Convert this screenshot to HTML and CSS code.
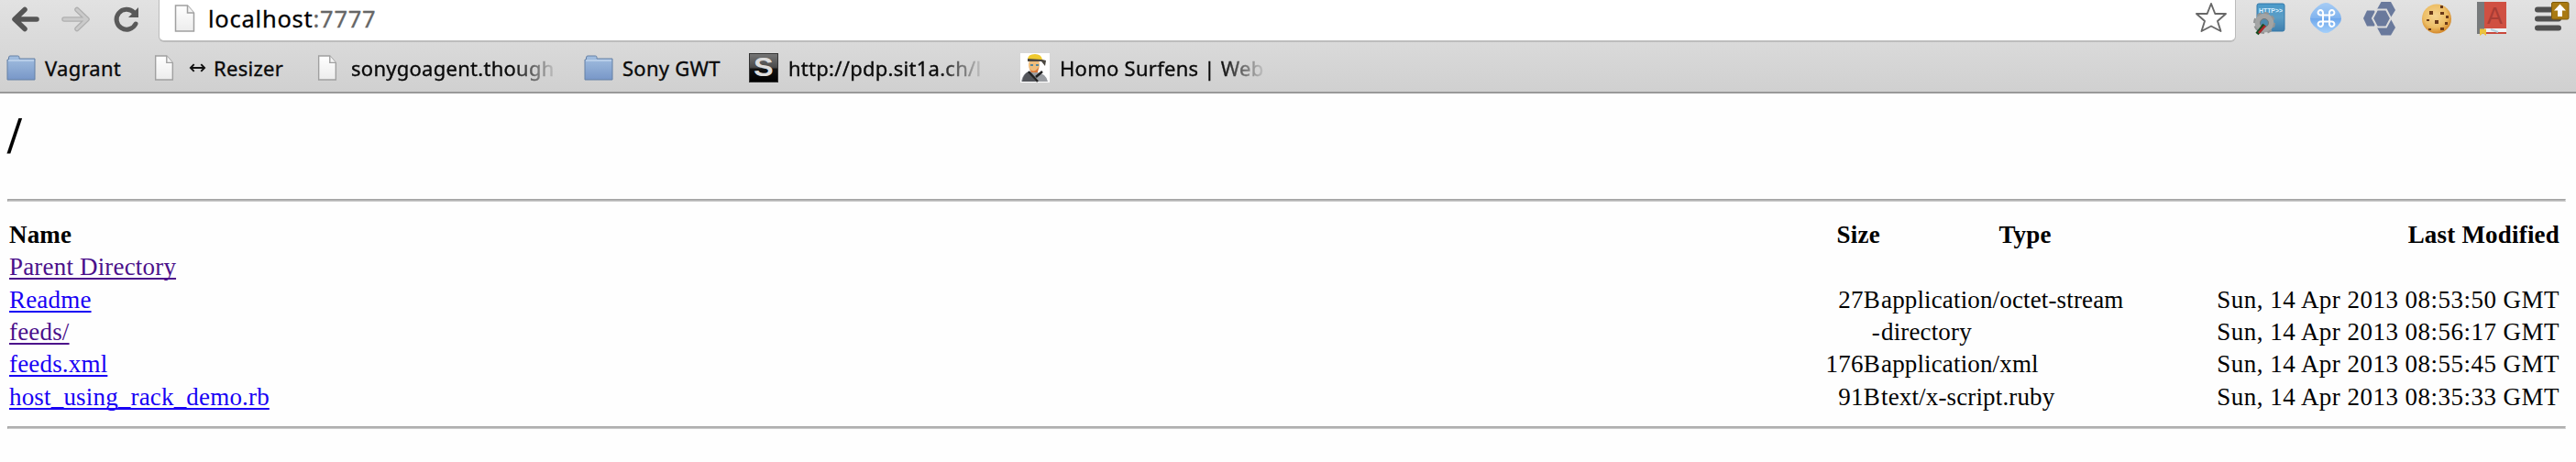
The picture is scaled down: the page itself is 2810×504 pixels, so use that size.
FILE: index.html
```html
<!DOCTYPE html>
<html lang="en">
<head>
<meta charset="utf-8">
<title>/</title>
<link rel="stylesheet" href="styles.css">
</head>
<body>
<svg class="defs" width="0" height="0">
  <defs>
    <linearGradient id="folderFill" x1="0" y1="0" x2="0" y2="1"><stop offset="0" stop-color="#a3bfe0"/><stop offset="1" stop-color="#7897c8"/></linearGradient>
    <linearGradient id="pageFill" x1="0" y1="0" x2="0" y2="1"><stop offset="0" stop-color="#fff"/><stop offset="1" stop-color="#ececec"/></linearGradient>
    <linearGradient id="sFill" x1="0" y1="0" x2="0" y2="1"><stop offset="0" stop-color="#777"/><stop offset=".48" stop-color="#4a4a4a"/><stop offset=".55" stop-color="#111"/><stop offset="1" stop-color="#000"/></linearGradient>
    <linearGradient id="httpFill" x1="0" y1="0" x2="0" y2="1"><stop offset="0" stop-color="#4a9aca"/><stop offset=".5" stop-color="#5b9dc5"/><stop offset="1" stop-color="#3f7fae"/></linearGradient>
    <linearGradient id="cmdFill" x1="0" y1="0" x2="0" y2="1"><stop offset="0" stop-color="#a6ccf5"/><stop offset=".5" stop-color="#82b4ee"/><stop offset=".52" stop-color="#6fa8ec"/><stop offset="1" stop-color="#a4cffa"/></linearGradient>
    <radialGradient id="cookieFill" cx=".45" cy=".4" r=".6"><stop offset="0" stop-color="#f6d592"/><stop offset=".65" stop-color="#edbe66"/><stop offset="1" stop-color="#d4882a"/></radialGradient>
    <symbol id="folder" viewBox="0 0 32 28"><path d="M1 5V27H31V4H14V2.500Q14 1 12.500 1H4Q2.500 1 2.500 3V5Z" fill="url(#folderFill)" stroke="#6580a5"/><path d="M2 6H30" stroke="#c0d4ec" stroke-width="1.500"/></symbol>
    <symbol id="page" viewBox="0 0 22 30"><path d="M1 1H14L21 9V29H1Z" fill="url(#pageFill)" stroke="#a0a0a0" stroke-width="1.500"/><path d="M14 1V9H21" fill="#f3f3f3" stroke="#a0a0a0" stroke-width="1.500"/></symbol>
  </defs>
</svg>
<header class="chrome">
  <div class="toolbar">
    <nav class="nav">
      <svg class="back" viewBox="0 0 32 28"><path d="M15 3.500L4 14L15 24.500M5 14H28" fill="none" stroke="#555" stroke-width="5.500" stroke-linecap="round" stroke-linejoin="round"/></svg>
      <svg class="forward" viewBox="0 0 32 28"><path d="M17 3.500L28 14L17 24.500M27 14H3" fill="none" stroke="#b0b0b0" stroke-width="5.500" stroke-linecap="round" stroke-linejoin="round"/><path d="M17 3.500L28 14L17 24.500M26 14H3" fill="none" stroke="#cacaca" stroke-width="3" stroke-linecap="round" stroke-linejoin="round"/></svg>
      <svg class="reload" viewBox="0 0 28 28"><path d="M22 6.500A11 11 0 1 0 24 19" fill="none" stroke="#595959" stroke-width="5" stroke-linecap="round"/><path d="M27 1V12H16Z" fill="#595959"/></svg>
    </nav>
    <div class="omnibox">
      <svg class="page-icon large"><use href="#page"/></svg>
      <span class="url">localhost<span class="port">:7777</span></span>
      <svg class="star" viewBox="0 0 36 36"><path d="M18 2L22.300 13H34L25 21L28.500 32L18 26.500L7.500 32L11 21L2 13H13.700Z" fill="#fff" stroke="#686868" stroke-width="1.900" stroke-linejoin="round"/></svg>
    </div>
    <div class="extensions">
      <svg viewBox="0 0 36 36"><rect x="4" y="2" width="30" height="30" rx="2" fill="url(#httpFill)" stroke="#3579a8"/><text x="6" y="12" class="http" textLength="26" lengthAdjust="spacingAndGlyphs">HTTP&gt;&gt;</text><circle cx="12" cy="23" r="7.500" fill="none" stroke="#a2a4a4" stroke-width="6"/><circle cx="12" cy="23" r="11" fill="none" stroke="#929494" stroke-width="2" stroke-dasharray="5 3.600"/><circle cx="12" cy="23" r="4.500" fill="#4d8aae" stroke="#777"/><path d="M12 25L4 35" stroke="#164d20" stroke-width="4"/><path d="M13 26L6 34" stroke="#ad2529" stroke-width="2.500"/></svg>
      <svg viewBox="0 0 36 36"><path d="M18 1Q23 1 29 7Q35 13 35 18Q35 23 29 28Q23 34 18 34Q13 34 7 28Q1 23 1 18Q1 13 7 7Q13 1 18 1Z" fill="url(#cmdFill)"/><path d="M15 14.500V21.500H22V14.500ZM15 14.500H12.500A2.700 2.700 0 1 1 15 12ZM22 14.500V12A2.700 2.700 0 1 1 24.500 14.500ZM22 21.500H24.500A2.700 2.700 0 1 1 22 24ZM15 21.500V24A2.700 2.700 0 1 1 12.500 21.500Z" fill="none" stroke="#fff" stroke-width="2"/></svg>
      <svg viewBox="0 0 36 36"><g fill="#69799c" transform="translate(-1 -2)"><path d="M0 20L4 11.500H12L16 20L12 28.500H4Z"/><path d="M15 10L19.500 2H30L35 11L30 19H19.500Z"/><path d="M15 30L19.500 21H30L35 30L30 38.500H19.500Z"/><path d="M10 20L15 10.500H25L30 20L25 29.500H15Z" stroke="#dcdcdc" stroke-width="2"/></g></svg>
      <svg viewBox="0 0 36 36"><circle cx="18" cy="18.500" r="16" fill="url(#cookieFill)"/><g fill="#693919" transform="translate(0 -1)"><rect x="10" y="11" width="4" height="4"/><rect x="22" y="5" width="3" height="3"/><rect x="22" y="12" width="4" height="3"/><rect x="16" y="21" width="4" height="4"/><rect x="28" y="16" width="3" height="3"/><rect x="7" y="20" width="3" height="2"/><rect x="27" y="23" width="3" height="3"/><rect x="22" y="29" width="4" height="3"/><rect x="9" y="30" width="3" height="2"/></g></svg>
      <svg viewBox="0 0 36 36"><rect x="2" y="0" width="32" height="29" fill="#d05042"/><rect x="2" y="0" width="8" height="35" fill="#777a7c"/><path d="M10 29H34V33H10Z" fill="#eef2f5"/><path d="M10 34H34" stroke="#c9483b" stroke-width="2"/><path d="M17 30L25 33" stroke="#b5d1dd" stroke-width="2"/><text x="13" y="24" class="dict">A</text><path d="M5 29.500H12V37L8.500 34.500L5 37Z" fill="#ecc23c"/></svg>
      <svg class="menu" viewBox="0 0 40 36"><g stroke="#505050" stroke-width="6" stroke-linecap="round"><path d="M5 8.500H28M5 18.500H28M5 28.500H28"/></g><rect x="20.500" y=".5" width="18.500" height="18.500" rx="1.500" fill="#a97a13" stroke="#815b08"/><path d="M29.500 2.500L36 9.500H32V16H27V9.500H23Z" fill="#fff"/></svg>
    </div>
  </div>
  <div class="bookmarks">
    <a class="bookmark vagrant"><svg class="folder-icon"><use href="#folder"/></svg><span>Vagrant</span></a>
    <a class="bookmark resizer"><svg class="page-icon"><use href="#page"/></svg><span class="label"><svg class="arrows" viewBox="0 0 20 12"><path d="M2 6H18M6 2L2 6L6 10M14 2L18 6L14 10" fill="none" stroke="#111" stroke-width="2"/></svg>Resizer</span></a>
    <a class="bookmark sony"><svg class="page-icon"><use href="#page"/></svg><span class="fade">sonygoagent.though</span></a>
    <a class="bookmark gwt"><svg class="folder-icon"><use href="#folder"/></svg><span>Sony GWT</span></a>
    <a class="bookmark pdp"><svg class="site-icon" viewBox="0 0 32 32"><rect x=".5" y=".5" width="31" height="31" fill="url(#sFill)" stroke="#333"/><text x="5" y="25" class="s-letter" textLength="22" lengthAdjust="spacingAndGlyphs">S</text></svg><span class="fade">http://pdp.sit1a.ch/l</span></a>
    <a class="bookmark homo"><svg class="site-icon" viewBox="0 0 32 32"><rect width="32" height="32" fill="#fff"/><path d="M1 31Q2 23 9 20L18 21Q28 22 30 31Z" fill="#999ca1"/><path d="M2 31Q3 23 9 20L17 31Z" fill="#53555a"/><path d="M9 20L19 31M17 26L24 20" stroke="#222" stroke-width="2.500"/><ellipse cx="15" cy="13" rx="6" ry="8.500" fill="#efbd7b"/><path d="M10 17Q15 23 20 15L19 21H12Z" fill="#d9793c"/><path d="M8 7Q8 1 16 1Q23 1 24 7Z" fill="#efc92e"/><path d="M8 6L24 7L28 8L27 14L23 9H8Z" fill="#4b4740"/><path d="M11 13H14M17 13H20" stroke="#56879c" stroke-width="2"/></svg><span class="fade">Homo Surfens | Web</span></a>
  </div>
</header>
<main class="listing">
  <h1>/</h1>
  <hr>
  <table>
    <colgroup><col class="c-name"><col class="c-size"><col class="c-type"><col class="c-mtime"></colgroup>
    <tr><th class="name">Name</th><th class="size">Size</th><th class="type">Type</th><th class="mtime">Last Modified</th></tr>
    <tr><td class="name"><a class="visited">Parent Directory</a></td><td></td><td></td><td></td></tr>
    <tr><td class="name"><a>Readme</a></td><td class="size">27B</td><td class="type">application/octet-stream</td><td class="mtime">Sun, 14 Apr 2013 08:53:50 GMT</td></tr>
    <tr><td class="name"><a class="visited">feeds/</a></td><td class="size">-</td><td class="type">directory</td><td class="mtime">Sun, 14 Apr 2013 08:56:17 GMT</td></tr>
    <tr><td class="name"><a>feeds.xml</a></td><td class="size">176B</td><td class="type">application/xml</td><td class="mtime">Sun, 14 Apr 2013 08:55:45 GMT</td></tr>
    <tr><td class="name"><a>host_using_rack_demo.rb</a></td><td class="size">91B</td><td class="type">text/x-script.ruby</td><td class="mtime">Sun, 14 Apr 2013 08:35:33 GMT</td></tr>
  </table>
  <hr>
</main>
</body>
</html>
```
FILE: styles.css
```css
* { box-sizing: border-box; }
body { margin: 0; height: 504px; overflow: hidden; background: #fefefe; color: #000; font-family: "Liberation Serif", "Times New Roman", serif; }
svg { display: block; flex: none; overflow: visible; }
.defs { position: absolute; }

.chrome { height: 102px; background: linear-gradient(#e2e2e2, #d0d0d0); border-bottom: 2px solid #999; font-family: "Noto Sans", sans-serif; }
.toolbar { display: flex; height: 46px; }
.nav { display: flex; width: 173px; padding: 7px 0 0 12px; }
.back, .forward { width: 32px; height: 28px; }
.forward { margin-left: 23px; }
.reload { width: 28px; height: 28px; margin-left: 25px; }
.omnibox { display: flex; width: 2266px; height: 46px; padding-left: 16px; background: #fff; border: 1px solid #bbb; border-top: 0; border-bottom: 2px solid #bdbdbd; border-radius: 0 0 6px 6px; }
.url { margin: 0 0 0 14px; font-size: 25.500px; line-height: 40px; letter-spacing: .75px; white-space: nowrap; -webkit-text-stroke: .3px currentColor; }
.port { color: #666; }
.star { width: 36px; height: 36px; margin: 2px 8px 0 auto; }
.extensions { display: flex; gap: 24.500px; padding: 2px 0 0 19px; }
.extensions svg { width: 36px; height: 36px; }
.extensions svg.menu { width: 40px; margin-left: 2.500px; }
.http { font: bold 8px "Liberation Sans", sans-serif; fill: #d8efff; }
.dict { font: 25px "Liberation Sans", sans-serif; fill: #a93d34; }
.s-letter { font: bold 29px "Liberation Sans", sans-serif; fill: #ddd; }

.page-icon { width: 22px; height: 28px; }
.page-icon.large { height: 30px; width: 23px; margin-top: 5px; }
.folder-icon { width: 32px; height: 28px; }
.site-icon { width: 32px; height: 32px; }
.bookmarks { display: flex; height: 54px; padding: 1px 0 0 7px; align-items: center; }
.bookmark { display: flex; align-items: center; font-size: 22px; line-height: 30px; letter-spacing: .27px; white-space: nowrap; color: #0a0a0a; -webkit-text-stroke: .35px currentColor; }
.vagrant { width: 161px; gap: 10px; }
.resizer { width: 178px; gap: 16px; }
.sony { width: 291px; gap: 15px; }
.gwt { width: 180px; gap: 10px; }
.pdp { width: 296px; gap: 11px; }
.homo { gap: 11px; }
.label { display: flex; align-items: center; gap: 8px; }
.arrows { width: 19px; height: 12px; }
.fade { -webkit-mask-image: linear-gradient(to right, #000 calc(100% - 46px), rgba(0,0,0,.1)); mask-image: linear-gradient(to right, #000 calc(100% - 46px), rgba(0,0,0,.1)); }

.listing { padding: 14px 11px 0 8px; }
h1 { margin: 0 0 37px; font-size: 56px; line-height: 64px; }
hr { height: 3px; margin: 0; border: 1px solid #a4a4a4; border-right-color: #ddd; border-bottom-color: #cacaca; background: #b4b4b4; }
table { width: 2783px; margin: 19px 0 14px 2px; table-layout: fixed; border-collapse: collapse; font-size: 27px; }
tr { height: 35.300px; }
td, th { padding: 0; line-height: 35px; white-space: nowrap; }
.c-name { width: 1942px; }
.c-size { width: 99px; }
.c-type { width: 315px; }
.c-mtime { width: 427px; }
.name { text-align: left; letter-spacing: .18px; }
.size { text-align: right; letter-spacing: .25px; }
.type { padding-left: 1px; letter-spacing: .15px; }
.mtime { text-align: right; letter-spacing: .47px; padding-right: 1px; }
th.mtime { letter-spacing: .2px; }
a { color: inherit; }
.name a { color: #1800f4; text-decoration: underline; text-decoration-thickness: 2px; text-underline-offset: 3px; text-decoration-skip-ink: none; }
.name a.visited { color: #4b108b; }
```
